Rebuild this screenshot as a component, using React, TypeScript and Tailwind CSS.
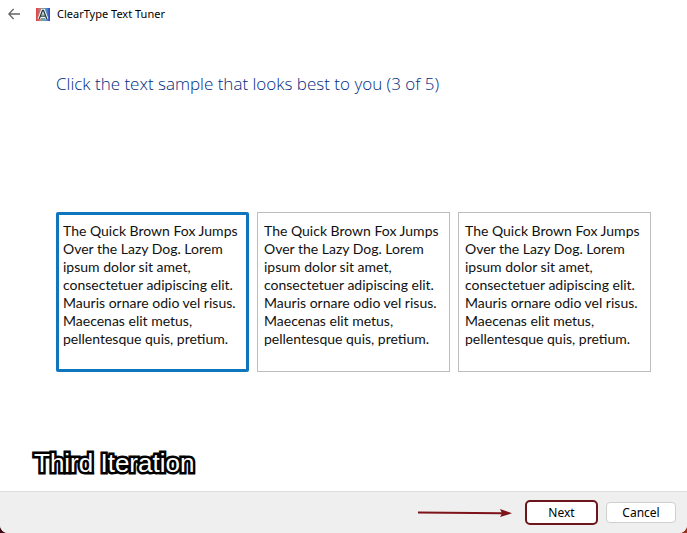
const sampleLines = [
  "The Quick Brown Fox Jumps",
  "Over the Lazy Dog. Lorem",
  "ipsum dolor sit amet,",
  "consectetuer adipiscing elit.",
  "Mauris ornare odio vel risus.",
  "Maecenas elit metus,",
  "pellentesque quis, pretium.",
];

function AppIcon() {
  return (
    <svg width="14" height="13" viewBox="0 0 14 13" aria-hidden="true">
      <defs>
        <linearGradient id="spectrum" x1="0" x2="1" y1="0" y2="0">
          <stop offset="0" stopColor="#e0413f" />
          <stop offset="0.25" stopColor="#c8707c" />
          <stop offset="0.5" stopColor="#6fae9a" />
          <stop offset="0.75" stopColor="#5c8ad0" />
          <stop offset="1" stopColor="#2a3fc0" />
        </linearGradient>
      </defs>
      <rect width="14" height="13" fill="url(#spectrum)" />
      <path d="M3 11 6.3 2.5h1.4L11 11M4.8 8.4h4.4" fill="none" stroke="#f4f7f5" strokeWidth="3" />
      <path d="M3.2 11 6.5 2.5h1l3.3 8.5M4.6 8.2h4.8" fill="none" stroke="#24403c" strokeWidth="1.3" />
    </svg>
  );
}

function Sample({ selected }: { selected?: boolean }) {
  return (
    <button
      type="button"
      aria-pressed={!!selected}
      className={
        "h-40 min-w-0 flex-1 overflow-hidden text-left whitespace-nowrap bg-white pb-3.5 font-[Lato,sans-serif] text-[14px] leading-[18px] text-[#111] " +
        (selected ? "rounded-xs border-3 border-[#0f75bc] px-1" : "border border-[#bdbdbd] px-1.5")
      }
    >
      {sampleLines.map((line) => (
        <span key={line} className="block">
          {line}
        </span>
      ))}
    </button>
  );
}

export default function App() {
  return (
    <div className="min-h-screen bg-linear-to-r from-[#3d0a18] to-[#9c2f1c]">
      <div className="flex min-h-screen flex-col overflow-hidden rounded-b-lg bg-white font-['Noto_Sans','Open_Sans',sans-serif] text-black">
        <header className="flex h-7 items-center pl-2">
          <button type="button" aria-label="Back" className="text-[#666]">
            <svg width="12" height="12" viewBox="0 0 12 12" fill="none" stroke="currentColor" strokeWidth="1.3">
              <path d="M12 6H.8M5.6 1 .8 6l4.8 5" />
            </svg>
          </button>
          <span className="ml-4 flex items-center gap-[7px]">
            <AppIcon />
            <span className="text-[11px]">ClearType Text Tuner</span>
          </span>
        </header>

        <main className="flex flex-1 flex-col pr-9 pl-14">
          <h1 className="mt-11 font-['Open_Sans',sans-serif] text-[17px] leading-6 font-light text-[#002b80]">
            Click the text sample that looks best to you (3 of 5)
          </h1>
          <div className="mt-29 flex gap-2">
            <Sample selected />
            <Sample />
            <Sample />
          </div>
          <p className="mt-auto mb-3.5 -ml-[22px] font-['Liberation_Sans',sans-serif] text-[26px] leading-7 text-white [paint-order:stroke_fill] [-webkit-text-stroke:5px_#000]">
            Third Iteration
          </p>
        </main>

        <footer className="flex h-[42px] items-center justify-end gap-2 border-t border-[#dedede] bg-[#efefef] pr-[11px]">
          <svg width="94" height="8" viewBox="0 0 94 8" className="mr-[5px]" aria-hidden="true">
            <path d="M0 3.5 84 4.3" stroke="#7c1419" strokeWidth="2" />
            <path d="M82 0 94 4.3 82 8 84 4.3Z" fill="#7c1419" />
          </svg>
          <button
            type="button"
            className="h-[25px] w-[73px] rounded-[5px] border-2 border-[#6b161c] bg-white text-[12px] leading-4"
          >
            Next
          </button>
          <button
            type="button"
            className="h-[21px] w-[70px] rounded-sm border border-[#cfcfcf] bg-white text-[12px] leading-4"
          >
            Cancel
          </button>
        </footer>
      </div>
    </div>
  );
}
